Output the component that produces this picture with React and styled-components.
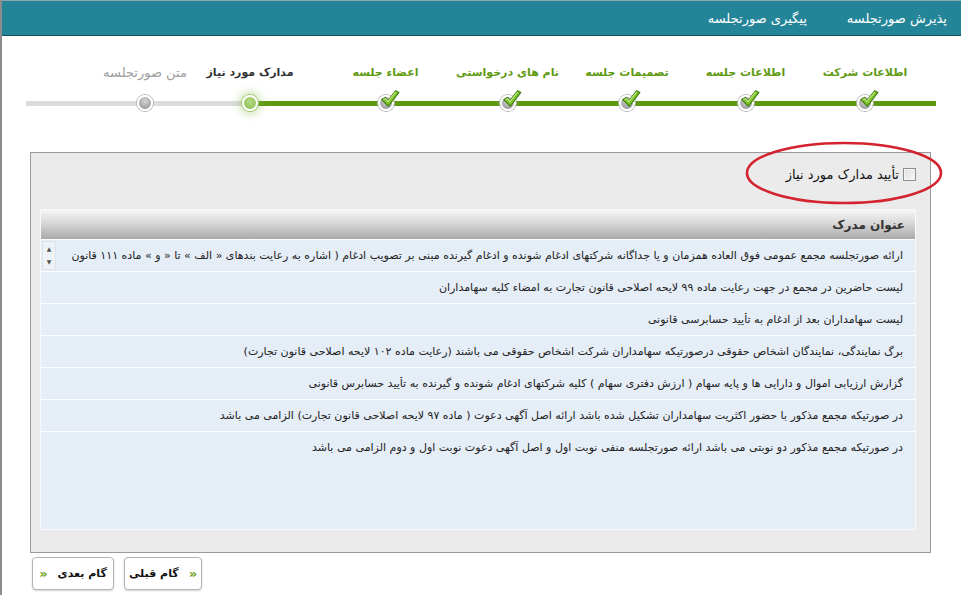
import React from "react";
import styled, { createGlobalStyle } from "styled-components";

const Global = createGlobalStyle`
  html, body { margin: 0; padding: 0; background: #fff; }
  body { font-family: "DejaVu Sans", "Noto Sans", sans-serif; }
`;

const Page = styled.div`
  position: relative;
  width: 961px;
  height: 595px;
  border-left: 2px solid #8c8c8c;
  box-sizing: border-box;
`;

const Header = styled.div`
  height: 36px;
  box-sizing: border-box;
  background: #248599;
  border-top: 1px solid #8fa8ae;
  border-bottom: 1px solid #16505e;
  display: flex;
  flex-direction: row;
  direction: rtl;
  align-items: center;
  gap: 40px;
  padding-right: 14px;
`;

const NavLink = styled.span`
  color: #fff;
  font-size: 13px;
  white-space: nowrap;
`;

const Steps = styled.div`
  direction: rtl;
  display: flex;
  margin: 27px 25px 0 24px;
  padding-right: 11px;
  position: relative;
  &::before {
    content: "";
    position: absolute;
    left: 0;
    right: 0;
    top: 38px;
    height: 5px;
    background: linear-gradient(to right, #dcdcdc 0 224px, #5e9810 224px);
  }
`;

const Step = styled.div`
  width: ${(p) => p.w}px;
  display: flex;
  flex-direction: column;
  align-items: center;
  position: relative;
`;

const StepLabel = styled.div`
  font-size: ${(p) => (p.state === "future" ? "13px" : "11px")};
  white-space: nowrap;
  height: 20px;
  line-height: 20px;
  color: ${(p) => (p.state === "done" ? "#5f9a12" : p.state === "active" ? "#333" : "#a0a0a0")};
  font-weight: ${(p) => (p.state === "future" ? "normal" : "bold")};
`;

const Dot = styled.div`
  margin-top: 12px;
  width: 16px;
  height: 16px;
  border-radius: 50%;
  box-sizing: border-box;
  border: 2px solid #fff;
  position: relative;
  background: ${(p) =>
    p.state === "active"
      ? "radial-gradient(circle at 50% 40%, #b6d98a, #86bb45)"
      : "radial-gradient(circle at 50% 35%, #d6d6d6, #8a8a8a)"};
  box-shadow: ${(p) =>
    p.state === "active"
      ? "0 0 0 1px #9cc46a, 0 0 8px 3px rgba(140,190,80,0.45)"
      : "0 0 0 1px #b5b5b5"};
`;

const Check = styled.svg`
  position: absolute;
  left: -1px;
  top: -8px;
  width: 21px;
  height: 19px;
`;

const Panel = styled.div`
  margin: 41px 0 0 28px;
  width: 901px;
  height: 401px;
  box-sizing: border-box;
  background: #ebebeb;
  border: 1px solid #9a9a9a;
  padding: 11px 14px 0 9px;
  direction: rtl;
`;

const ConfirmRow = styled.label`
  display: flex;
  align-items: center;
  gap: 4px;
  font-size: 13px;
  color: #111;
  height: 20px;
`;

const Box = styled.span`
  width: 11px;
  height: 11px;
  border: 1px solid #8e8f8f;
  background: linear-gradient(135deg, #dcdcdc, #fafafa);
  box-shadow: inset 0 0 0 1px #f4f4f4;
`;

const Grid = styled.div`
  margin-top: 25px;
  height: 321px;
  box-sizing: border-box;
  border: 1px solid #f6f8fb;
  background: #e5edf6;
  display: flex;
  flex-direction: column;
`;

const GridHead = styled.div`
  height: 29px;
  flex: none;
  background: linear-gradient(to bottom, #f6f6f6 0%, #d8d8d8 45%, #a9a9a9 100%);
  display: flex;
  align-items: center;
  padding-right: 10px;
  font-size: 12px;
  font-weight: bold;
  color: #333;
`;

const Row = styled.div`
  height: 32px;
  flex: none;
  box-sizing: border-box;
  border-top: 1px solid #fbfdff;
  display: flex;
  align-items: center;
  padding: 0 12px 0 1px;
  gap: 8px;
`;

const RowText = styled.div`
  flex: 1;
  font-size: 11px;
  color: #222;
  white-space: nowrap;
  overflow: hidden;
`;

const Spinner = styled.div`
  width: 12px;
  height: 27px;
  flex: none;
  background: #eef2f6;
  border: 1px solid #dde3ea;
  display: flex;
  flex-direction: column;
  align-items: center;
  justify-content: space-around;
  font-size: 6px;
  color: #555;
  line-height: 6px;
`;

const Footer = styled.div`
  display: flex;
  gap: 10px;
  margin: 4px 0 0 30px;
`;

const NavButton = styled.button`
  height: 33px;
  width: ${(p) => p.w}px;
  box-sizing: border-box;
  background: #fff;
  border: 1px solid #b4b4b4;
  border-radius: 4px;
  box-shadow: 0 1px 2px rgba(0, 0, 0, 0.18);
  display: flex;
  align-items: center;
  justify-content: center;
  gap: 10px;
  font-family: "DejaVu Sans", sans-serif;
  font-size: 11px;
  font-weight: bold;
  color: #111;
  padding: 0;
`;

const Chev = styled.span`
  color: #6aa51a;
  font-weight: bold;
  font-size: 13px;
  direction: ltr;
  unicode-bidi: isolate;
`;

const Annotation = styled.svg`
  position: absolute;
  left: 742px;
  top: 140px;
  width: 202px;
  height: 66px;
  pointer-events: none;
`;

const steps = [
  { label: "اطلاعات شرکت", w: 120, state: "done" },
  { label: "اطلاعات جلسه", w: 119, state: "done" },
  { label: "تصمیمات جلسه", w: 118, state: "done" },
  { label: "نام های درخواستی", w: 121, state: "done" },
  { label: "اعضاء جلسه", w: 123, state: "done" },
  { label: "مدارک مورد نیاز", w: 148, state: "active" },
  { label: "متن صورتجلسه", w: 62, state: "future" },
];

const docs = [
  "ارائه صورتجلسه مجمع عمومی فوق العاده همزمان و یا جداگانه شرکتهای ادغام شونده و ادغام گیرنده مبنی بر تصویب ادغام ( اشاره به رعایت بندهای « الف » تا « و » ماده ۱۱۱ قانون",
  "لیست حاضرین در مجمع در جهت رعایت ماده ۹۹ لایحه اصلاحی قانون تجارت به امضاء کلیه سهامداران",
  "لیست سهامداران بعد از ادغام به تأیید حسابرسی قانونی",
  "برگ نمایندگی، نمایندگان اشخاص حقوقی درصورتیکه سهامداران شرکت اشخاص حقوقی می باشند (رعایت ماده ۱۰۲ لایحه اصلاحی قانون تجارت)",
  "گزارش ارزیابی اموال و دارایی ها و پایه سهام ( ارزش دفتری سهام ) کلیه شرکتهای ادغام شونده و گیرنده به تأیید حسابرس قانونی",
  "در صورتیکه مجمع مذکور با حضور اکثریت سهامداران تشکیل شده باشد ارائه اصل آگهی دعوت ( ماده ۹۷ لایحه اصلاحی قانون تجارت) الزامی می باشد",
  "در صورتیکه مجمع مذکور دو نوبتی می باشد ارائه صورتجلسه منفی نوبت اول و اصل آگهی دعوت نوبت اول و دوم الزامی می باشد",
];

function CheckMark() {
  return (
    <Check viewBox="0 0 19 17">
      <path
        d="M2.5 9.5 L6 7.5 L8 10.5 L15 1.5 L18 3 L8.5 15.5 Z"
        fill="#7cc42a"
        stroke="#3f7d0c"
        strokeWidth="1"
        strokeLinejoin="round"
      />
      <path d="M4 9.6 L6 8.6 L8 11.4 L15.2 2.6" fill="none" stroke="#c8f08e" strokeWidth="1" />
    </Check>
  );
}

export default function App() {
  return (
    <>
      <Global />
      <Page>
        <Header>
          <NavLink>پذیرش صورتجلسه</NavLink>
          <NavLink>پیگیری صورتجلسه</NavLink>
        </Header>
        <Steps>
          {steps.map((s) => (
            <Step key={s.label} w={s.w}>
              <StepLabel state={s.state}>{s.label}</StepLabel>
              <Dot state={s.state}>{s.state === "done" && <CheckMark />}</Dot>
            </Step>
          ))}
        </Steps>
        <Panel>
          <ConfirmRow>
            <Box />
            <span>تأیید مدارک مورد نیاز</span>
          </ConfirmRow>
          <Grid>
            <GridHead>عنوان مدرک</GridHead>
            {docs.map((d, i) => (
              <Row key={i}>
                <RowText>{d}</RowText>
                {i === 0 && (
                  <Spinner>
                    <span>▲</span>
                    <span>▼</span>
                  </Spinner>
                )}
              </Row>
            ))}
          </Grid>
        </Panel>
        <Footer>
          <NavButton w={82}>
            <Chev>»</Chev>
            <span>گام بعدی</span>
          </NavButton>
          <NavButton w={78}>
            <span>گام قبلی</span>
            <Chev>»</Chev>
          </NavButton>
        </Footer>
        <Annotation viewBox="0 0 202 66">
          <ellipse cx="100" cy="33" rx="97" ry="30" fill="none" stroke="#d3232e" strokeWidth="2.6" />
        </Annotation>
      </Page>
    </>
  );
}
